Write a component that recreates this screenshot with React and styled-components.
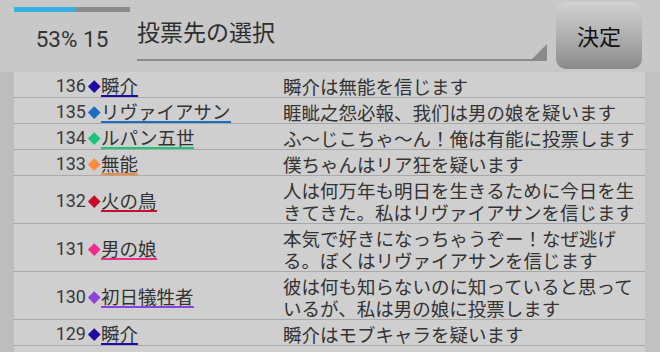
import React from 'react';
import styled, { createGlobalStyle } from 'styled-components';

const GlobalStyle = createGlobalStyle`
  html, body {
    margin: 0;
    padding: 0;
    background: #c2c2c2;
    font-family: 'Roboto', 'Noto Sans CJK JP', sans-serif;
    color: #333;
  }
`

const Screen = styled.div`
  width: 660px;
  height: 352px;
  overflow: hidden;
  display: flex;
  flex-direction: column;
`

const Header = styled.header`
  height: 72px;
  flex: none;
  display: flex;
  align-items: stretch;
  background: #c8c8c8;
  padding: 0 18px 0 14px;
  box-sizing: border-box;
`

const Status = styled.div`
  width: 116px;
  display: flex;
  flex-direction: column;
  align-items: center;
  padding-top: 7px;
  margin-right: 7px;
`

const Progress = styled.div`
  width: 100%;
  height: 5px;
  background: #8c8c8c;
  overflow: hidden;
`

const ProgressFill = styled.div`
  height: 100%;
  background: #38b0e2;
`

const StatusText = styled.div`
  margin-top: 14px;
  font-size: 22.5px;
  line-height: 26px;
  color: #333;
  white-space: nowrap;
`

const Select = styled.div`
  flex: 1;
  position: relative;
  margin: 0 9px 11px 0;
  border-bottom: 2px solid #8a8a8a;
  font-family: 'Noto Sans CJK JP', sans-serif;
  font-size: 23px;
  line-height: 28px;
  color: #2e2e2e;
  padding-top: 17px;
`

const Corner = styled.div`
  position: absolute;
  right: 0;
  bottom: 0;
  width: 0;
  height: 0;
  border-left: 15px solid transparent;
  border-bottom: 15px solid #8a8a8a;
`

const Button = styled.button`
  width: 86px;
  margin: 2px 0 3px;
  border: none;
  border-radius: 10px;
  background: linear-gradient(#d2d2d2, #b4b4b4 45%, #8a8a8a);
  font-family: 'Noto Sans CJK JP', sans-serif;
  font-size: 22px;
  color: #111;
  padding: 0 0 2px;
`

const Body = styled.div`
  flex: 1;
  display: flex;
  background: linear-gradient(90deg, #bdbdbd 0, #bdbdbd 14px, #cfcfcf 14px, #cfcfcf 645px, #c1c1c1 645px);
`

const Table = styled.div`
  margin-left: 14px;
  width: 631px;
  background: #cfcfcf;
`

const Row = styled.div`
  display: grid;
  grid-template-columns: 72px 15px 182px 1fr;
  align-items: center;
  border-bottom: 1px solid #a9a9a9;
  padding: 3px 0 0;
  min-height: 22px;
`

const Num = styled.span`
  text-align: right;
  font-size: 18px;
  line-height: 22px;
  color: #3a3a3a;
`

const Mark = styled.span`
  justify-self: center;
  width: 8.5px;
  height: 8.5px;
  margin-left: 1px;
  background: ${p => p.color};
  transform: rotate(45deg);
`

const NameCell = styled.div`
  display: flex;
  align-items: center;
`

const Name = styled.span`
  font-family: 'Noto Sans CJK JP', sans-serif;
  font-size: 18.5px;
  line-height: 20px;
  color: #333;
  border-bottom: 2px solid ${p => p.color};
`

const Comment = styled.div`
  font-family: 'Noto Sans CJK JP', sans-serif;
  font-size: 18.5px;
  line-height: 22px;
  color: #333;
  padding-right: 4px;
`

const votes = [
  { no: 136, name: '瞬介', color: '#1c0ca4', text: '瞬介は無能を信じます' },
  { no: 135, name: 'リヴァイアサン', color: '#1a6cc4', text: '睚眦之怨必報、我们は男の娘を疑います' },
  { no: 134, name: 'ルパン五世', color: '#18c878', text: 'ふ～じこちゃ～ん！俺は有能に投票します' },
  { no: 133, name: '無能', color: '#ff8c3c', text: '僕ちゃんはリア狂を疑います' },
  { no: 132, name: '火の鳥', color: '#c80c2c', text: '人は何万年も明日を生きるために今日を生きてきた。私はリヴァイアサンを信じます' },
  { no: 131, name: '男の娘', color: '#f02c88', text: '本気で好きになっちゃうぞー！なぜ逃げる。ぼくはリヴァイアサンを信じます' },
  { no: 130, name: '初日犠牲者', color: '#9040dc', text: '彼は何も知らないのに知っていると思っているが、私は男の娘に投票します' },
  { no: 129, name: '瞬介', color: '#1c0ca4', text: '瞬介はモブキャラを疑います' },
]

export default function App() {
  const progress = 53
  return (
    <>
      <GlobalStyle />
      <Screen>
        <Header>
          <Status>
            <Progress>
              <ProgressFill style={{ width: `${progress}%` }} />
            </Progress>
            <StatusText>{progress}% 15</StatusText>
          </Status>
          <Select>
            投票先の選択
            <Corner />
          </Select>
          <Button>決定</Button>
        </Header>
        <Body>
          <Table>
            {votes.map(v => (
              <Row key={v.no}>
                <Num>{v.no}</Num>
                <Mark color={v.color} />
                <NameCell>
                  <Name color={v.color}>{v.name}</Name>
                </NameCell>
                <Comment>{v.text}</Comment>
              </Row>
            ))}
          </Table>
        </Body>
      </Screen>
    </>
  )
}
